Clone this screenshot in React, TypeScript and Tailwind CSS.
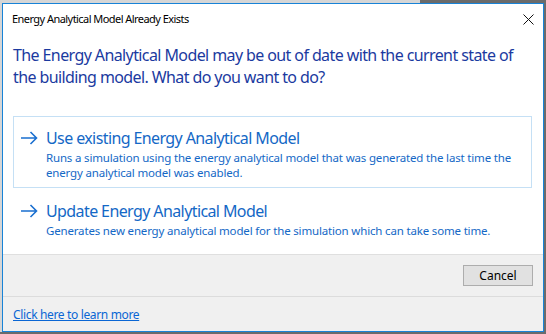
import React from "react";

const font = { fontFamily: '"Noto Sans", "Open Sans", sans-serif' };

function Arrow() {
  return (
    <svg width="18" height="14" viewBox="0 0 18 14" className="shrink-0">
      <path d="M1 7 H16.5 M10.5 1 L16.5 7 L10.5 13" fill="none" stroke="#1a6fd0" strokeWidth="1.6" />
    </svg>
  );
}

function CommandLink({ title, desc, boxed }: { title: string; desc: React.ReactNode; boxed?: boolean }) {
  return (
    <div className={`flex w-[519px] border ${boxed ? "border-[#c5e0f5]" : "border-transparent"} pl-[6px] pt-[10px] pb-[7px]`}>
      <div className="w-[26px] pt-[4px]">
        <Arrow />
      </div>
      <div className="flex flex-col">
        <div className="text-[16px] leading-[22px] text-[#1468c6] tracking-[-0.6px]">{title}</div>
        <div className="text-[11.5px] leading-[15px] mt-[1px] text-[#1468c6] tracking-[-0.17px]">{desc}</div>
      </div>
    </div>
  );
}

export default function App() {
  return (
    <div className="w-[546px] h-[334px] bg-[#6b6b6b] flex flex-col overflow-hidden" style={font}>
      <div className="h-[3px] flex">
        <div className="w-[420px] bg-[#d6d6d6]" />
      </div>
      <div className="flex">
        <div className="w-[2px] h-[329px] bg-[#d6d6d6]" />
        <div className="w-[542px] h-[329px] border border-[#1883d7] bg-white flex flex-col">
          <div className="h-[30px] flex items-center justify-between pl-[9px] pr-[9px]">
            <span className="text-[11px] text-black tracking-[-0.55px]">Energy Analytical Model Already Exists</span>
            <svg width="11" height="11" viewBox="0 0 11 11">
              <path d="M0.5 0.5 L10.5 10.5 M10.5 0.5 L0.5 10.5" stroke="#111" strokeWidth="1" fill="none" />
            </svg>
          </div>
          <div className="pl-[10px] pt-[10px] text-[16px] leading-[22px] text-[#1b3aa0] tracking-[-0.6px]">
            The Energy Analytical Model may be out of date with the current state of
            <br />
            the building model. What do you want to do?
          </div>
          <div className="pl-[10px] pt-[28px] flex flex-col gap-[1px]">
            <CommandLink
              boxed
              title="Use existing Energy Analytical Model"
              desc={
                <>
                  Runs a simulation using the energy analytical model that was generated the last time the
                  <br />
                  energy analytical model was enabled.
                </>
              }
            />
            <CommandLink
              title="Update Energy Analytical Model"
              desc="Generates new energy analytical model for the simulation which can take some time."
            />
          </div>
          <div className="flex-1" />
          <div className="h-[42px] border-t border-[#dfdfdf] bg-[#f0f0f0] flex items-center justify-end pr-[10px]">
            <div className="w-[70px] h-[21px] border border-[#adadad] bg-[#e1e1e1] flex items-center justify-center text-[12px] text-black">
              Cancel
            </div>
          </div>
          <div className="h-[35px] border-t border-[#dcdcdc] bg-[#f0f0f0] flex items-center pl-[10px] pt-[2px]">
            <span className="text-[12px] text-[#0a66d4] underline tracking-[-0.35px]">Click here to learn more</span>
          </div>
        </div>
      </div>
    </div>
  );
}
